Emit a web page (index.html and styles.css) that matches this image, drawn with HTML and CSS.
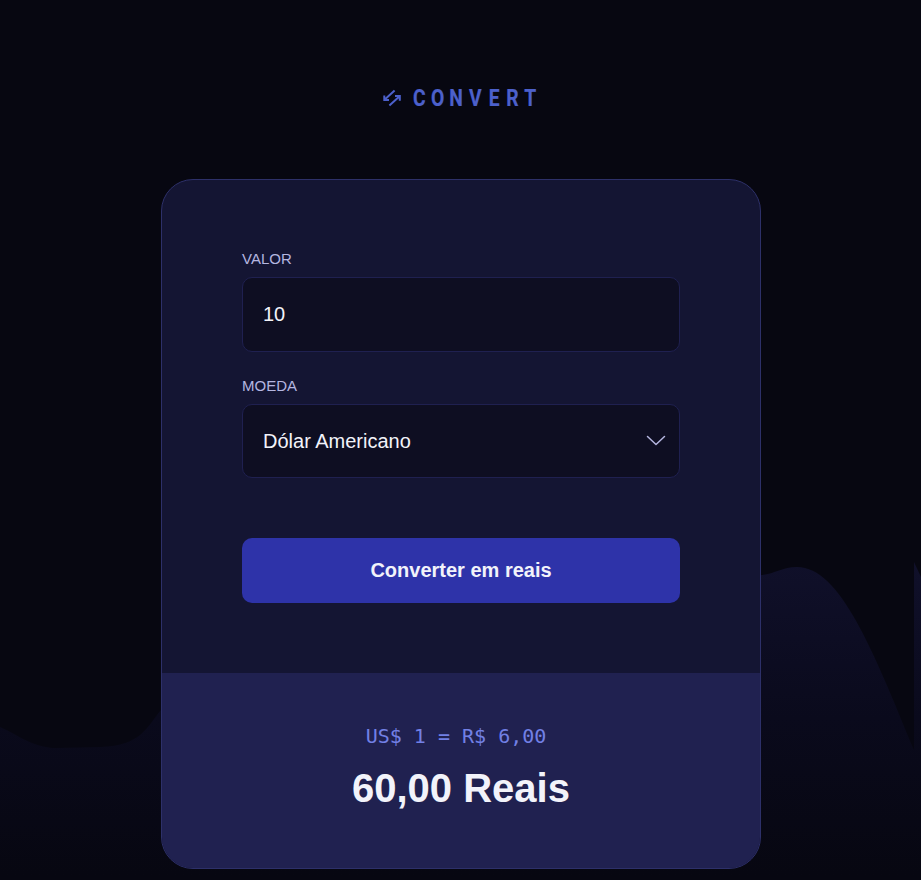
FILE: index.html
```html
<!DOCTYPE html>
<html lang="pt-BR">
<head>
<meta charset="utf-8">
<title>Convert</title>
<link rel="stylesheet" href="styles.css">
</head>
<body>
<svg class="waves" viewBox="0 0 921 330" aria-hidden="true">
  <defs>
    <linearGradient id="fade" gradientUnits="userSpaceOnUse" x1="0" y1="10" x2="0" y2="325">
      <stop offset="0" stop-color="#10102a"/>
      <stop offset="0.5" stop-color="#0a0a1c"/>
      <stop offset="1" stop-color="#070711"/>
    </linearGradient>
  </defs>
  <path fill="url(#fade)" d="M0 177C17 184 31 197 55 198L100 197C142 196 147 176 161 160L400 60L761 25C775 24 782 17 797 17C840 17 873 100 914 200V12L921 27V330H0Z"/>
</svg>
<main class="page">
  <svg class="logo" viewBox="0 0 156 32" role="img" aria-label="Convert">
    <g class="logo-mark">
      <path d="M11.6 8.4L1.5 17.7M1.3 13.4V18H6M6.4 23.4L16.6 14.2M12 13.9H16.8V18.8"/>
    </g>
    <text class="logo-text" transform="scale(.84 1)" y="23.8" x="43.2 65.2 87 109.9 132.4 154.2 175.4">CONVERT</text>
  </svg>
  <section class="card">
    <form class="form">
      <label class="label" for="amount">VALOR</label>
      <input class="field amount" id="amount" type="text" value="10">
      <label class="label" for="currency">MOEDA</label>
      <div class="select">
        <select class="field" id="currency">
          <option>Dólar Americano</option>
        </select>
        <svg class="chevron" viewBox="0 0 20 12" aria-hidden="true"><path d="M1.5 1.5L10 9.5L18.5 1.5"/></svg>
      </div>
      <button class="submit" type="button">Converter em reais</button>
    </form>
    <footer class="result">
      <span class="rate">US$ 1 = R$ 6,00</span>
      <h1 class="total">60,00 Reais</h1>
    </footer>
  </section>
</main>
</body>
</html>
```
FILE: styles.css
```css
* {
  box-sizing: border-box;
  margin: 0;
  padding: 0;
}

body {
  position: relative;
  height: 880px;
  overflow: hidden;
  background: #070711;
  color: #f2f3fa;
  font-family: "Liberation Sans", Arial, sans-serif;
}

.waves {
  position: absolute;
  left: 0;
  bottom: 0;
  width: 921px;
  height: 330px;
}

.page {
  position: relative;
  display: flex;
  flex-direction: column;
  align-items: center;
  width: 922px;
  padding-top: 82px;
}

.logo {
  display: block;
  width: 156px;
  height: 32px;
  margin-bottom: 65px;
  overflow: visible;
}

.logo-mark {
  fill: none;
  stroke: #4c60cb;
  stroke-width: 2;
}

.logo-text {
  fill: #4c60cb;
  stroke: #4c60cb;
  stroke-width: .2;
  font: 700 23px Roboto, sans-serif;
  text-anchor: middle;
}

.card {
  width: 600px;
  height: 690px;
  overflow: hidden;
  border: 1px solid #2d3069;
  border-radius: 32px;
  background: #141533;
}

.form {
  display: flex;
  flex-direction: column;
  height: 493px;
  padding: 70px 80px 0;
}

.label {
  height: 17px;
  margin-bottom: 10px;
  color: #b5b6e0;
  font-size: 15px;
  line-height: 17px;
}

.field {
  display: block;
  width: 100%;
  height: 74px;
  padding: 0 20px;
  appearance: none;
  border: 1px solid #1f2050;
  border-radius: 10px;
  outline: none;
  background: #0e0e22;
  color: #f2f3fa;
  font: 20px "Liberation Sans", Arial, sans-serif;
}

.amount {
  height: 75px;
  margin-bottom: 25px;
}

.select {
  position: relative;
  margin-bottom: 60px;
}

.chevron {
  position: absolute;
  top: 31px;
  right: 14px;
  width: 20px;
  height: 12px;
  fill: none;
  stroke: #b5b6e0;
  stroke-width: 1.5;
  stroke-linecap: round;
  stroke-linejoin: round;
}

.submit {
  height: 65px;
  border: 0;
  border-radius: 10px;
  background: #2e33a9;
  color: #f2f3fa;
  font: 700 20px "Liberation Sans", Arial, sans-serif;
}

.result {
  display: flex;
  flex-direction: column;
  align-items: center;
  height: 195px;
  padding-top: 50px;
  background: #202150;
}

.rate {
  padding-right: 10px;
  color: #7280e5;
  font: 20px/26px "DejaVu Sans Mono", monospace;
}

.total {
  margin-top: 16px;
  font-size: 40px;
  line-height: 46px;
}
```
